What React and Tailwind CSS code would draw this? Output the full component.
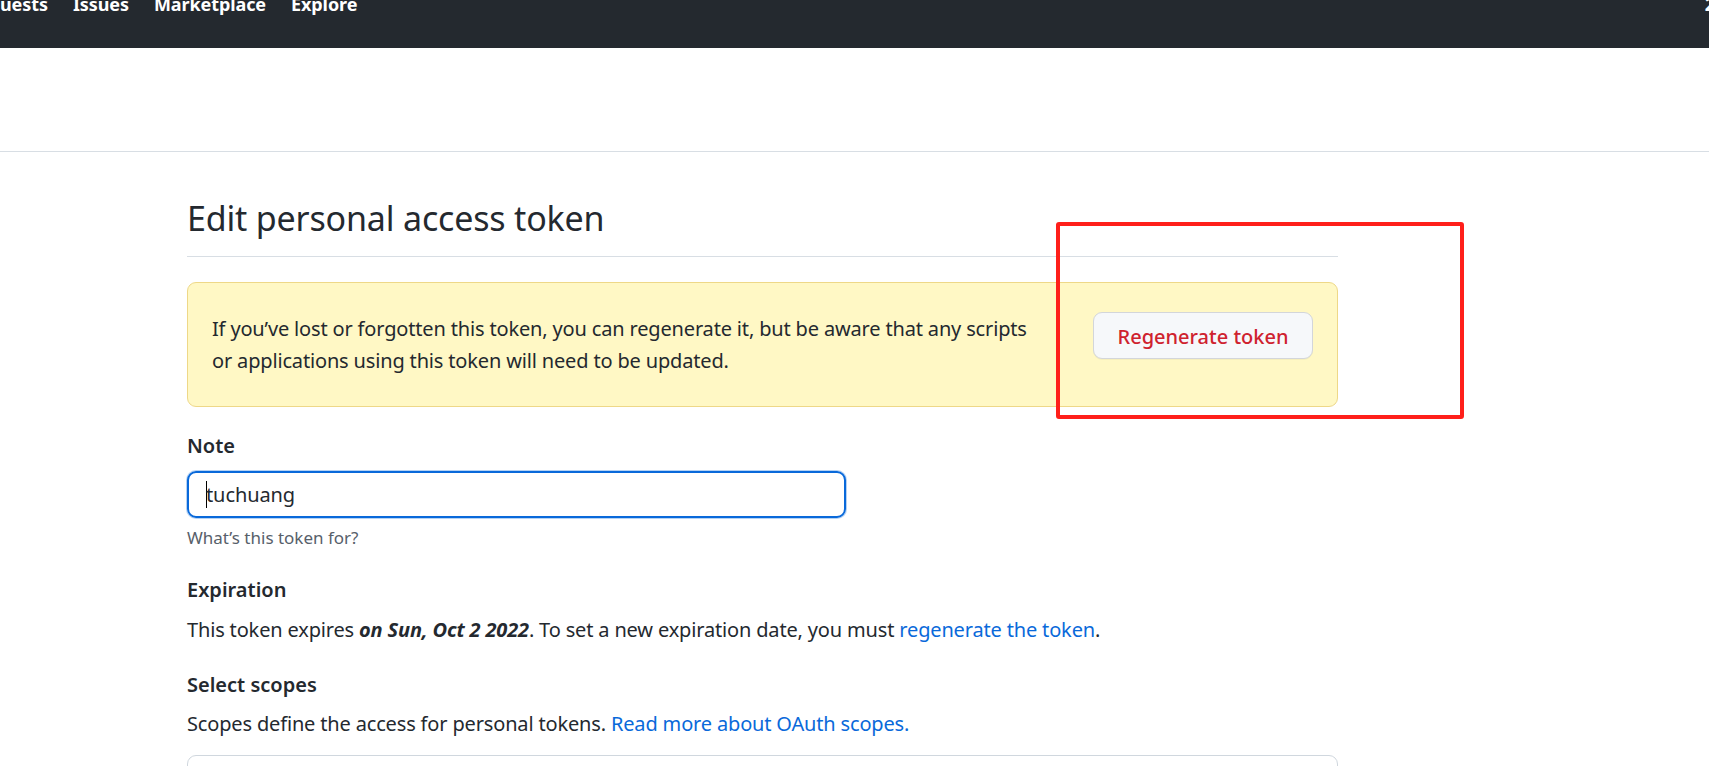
import React from "react";

export default function App() {
  return (
    <div className="relative w-[1709px] h-[766px] overflow-hidden bg-white text-[#24292f] font-['Noto_Sans',sans-serif]">
      <header className="h-[48px] bg-[#24292f] flex items-start overflow-hidden">
        <nav className="flex gap-[25px] -mt-[6px] text-white font-bold text-[18px] leading-[20px] tracking-[-0.005em]">
          <span>uests</span>
          <span>Issues</span>
          <span>Marketplace</span>
          <span>Explore</span>
        </nav>
        <span className="ml-auto -mr-[6px] -mt-[6px] text-white font-bold text-[18px] leading-[20px]">2</span>
      </header>
      <div className="h-[104px] border-b border-[#d8dee4]" />
      <main className="pl-[187px]">
        <div className="w-[1151px]">
          <div className="mt-[39px] pb-[11px] border-b border-[#d8dee4]">
            <h2 className="text-[34px] leading-[54px] font-normal tracking-[-0.005em]">Edit personal access token</h2>
          </div>

          <div className="mt-[25px] border border-[#eed888] bg-[#fff8c5] rounded-[9px] px-[24px] py-[30px] flex justify-between items-start">
            <p className="text-[20px] leading-[31.5px] whitespace-nowrap tracking-[-0.008em]">
              If you’ve lost or forgotten this token, you can regenerate it, but be aware that any scripts
              <br />
              or applications using this token will need to be updated.
            </p>
            <button className="h-[47px] w-[220px] -mt-[1px] pt-[2px] rounded-[9px] border border-[#d3d6da] bg-[#f6f8fa] text-[#cf222e] text-[20px] font-medium leading-[20px] shadow-[0_1px_0_rgba(27,31,36,0.04)]">
              Regenerate token
            </button>
          </div>

          <div className="mt-[23px] text-[20px] leading-[31.5px] font-semibold">Note</div>
          <div className="mt-[9px] w-[659px] h-[47px] rounded-[9px] border-2 border-[#0969da] shadow-[0_0_0_1px_rgba(9,105,218,0.3)] flex items-center pl-[17px]">
            <span className="w-px h-[27px] bg-black" />
            <span className="text-[20px] leading-[27px] -ml-[1px] tracking-[-0.005em]">tuchuang</span>
          </div>
          <div className="mt-[6px] text-[17px] leading-[27px] text-[#57606a]">What’s this token for?</div>

          <div className="mt-[23.5px] text-[20px] leading-[31.5px] font-semibold">Expiration</div>
          <p className="mt-[8.5px] text-[20px] leading-[31.5px] tracking-[-0.008em]">
            This token expires <em className="font-bold">on Sun, Oct 2 2022</em>. To set a new expiration date, you must{" "}
            <a className="text-[#0969da]">regenerate the token</a>.
          </p>

          <div className="mt-[23.5px] text-[20px] leading-[31.5px] font-semibold">Select scopes</div>
          <p className="mt-[7.5px] text-[20px] leading-[31.5px] tracking-[-0.008em]">
            Scopes define the access for personal tokens.{" "}
            <a className="text-[#0969da]">Read more about OAuth scopes.</a>
          </p>

          <div className="mt-[15.5px] h-[60px] border border-[#d0d7de] rounded-t-[9px]" />
        </div>
      </main>

      <div className="absolute left-[1056px] top-[222px] w-[408px] h-[197px] border-4 border-[#ff1f1a] rounded-[3px]" />
    </div>
  );
}
